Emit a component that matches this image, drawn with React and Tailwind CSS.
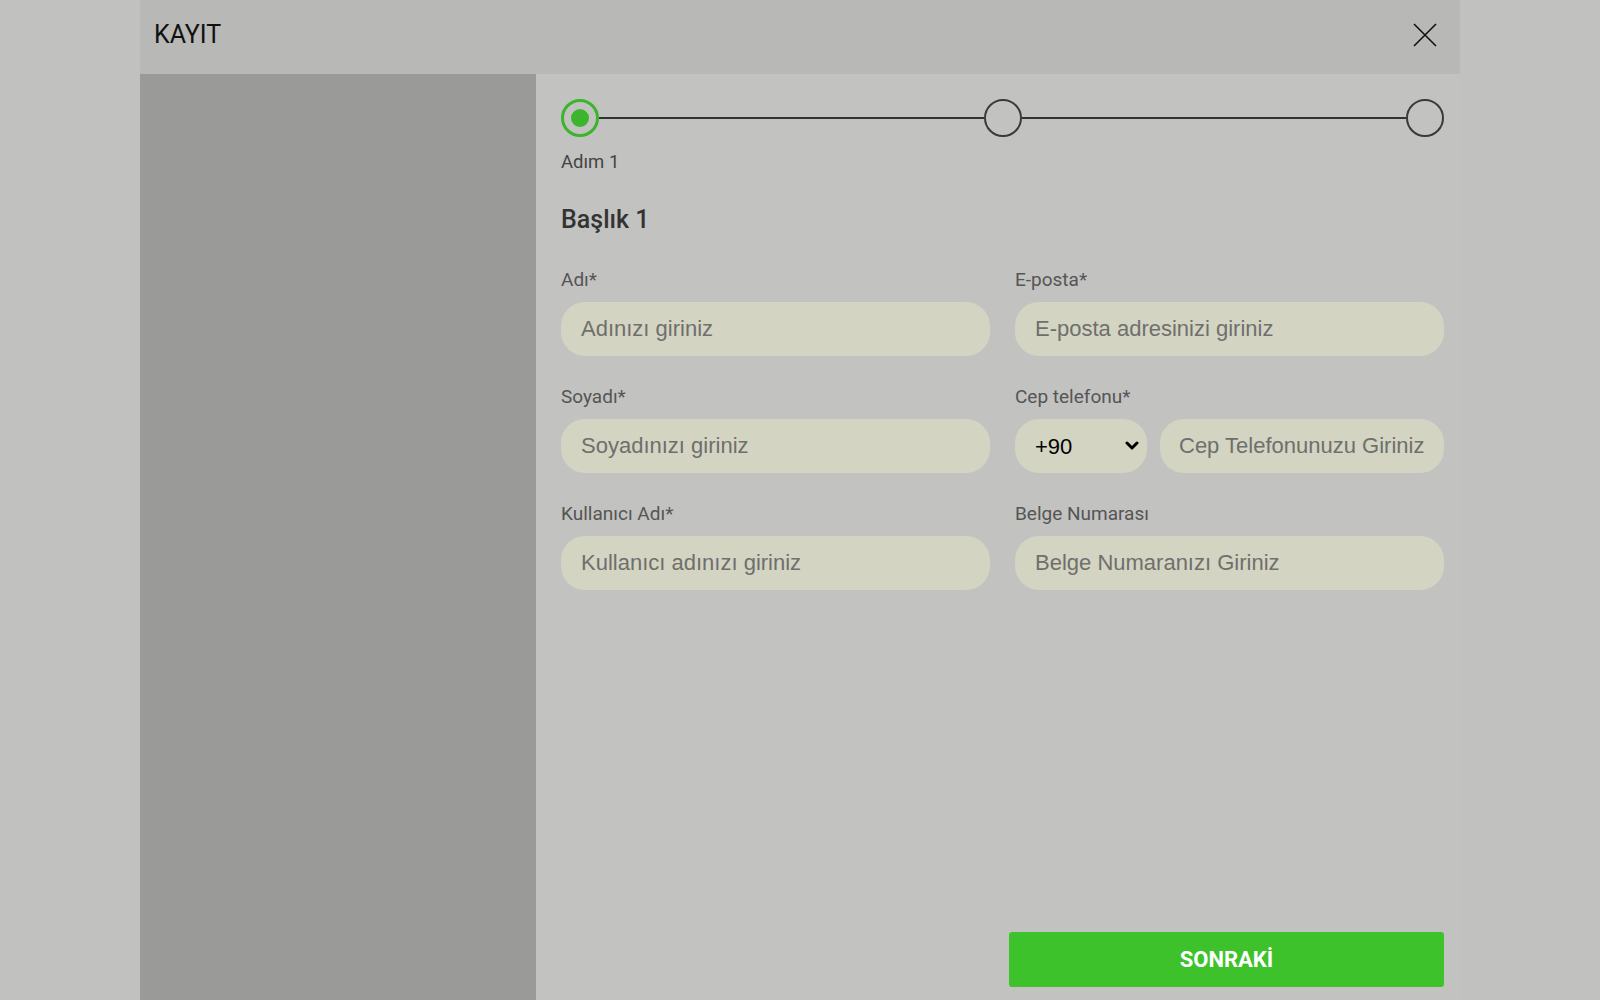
import React from "react";

function Field({ label, placeholder }) {
  return (
    <div className="flex flex-col">
      <label className="text-[19px] leading-[21px] text-[#555555] font-['Roboto',sans-serif]">{label}</label>
      <input
        className="mt-[12px] h-[54px] w-full rounded-[24px] bg-[#d4d4c3] px-[20px] text-[22px] text-[#222] font-['Liberation_Sans',Arial,sans-serif] outline-none placeholder:text-[#6f6f6c]"
        placeholder={placeholder}
      />
    </div>
  );
}

export default function App() {
  return (
    <div className="min-h-[1000px] w-full bg-[#c1c1bf] font-['Roboto',sans-serif]">
      <div className="mx-auto flex w-[1320px] flex-col">
        <div className="flex h-[74px] items-center justify-between bg-[#b8b8b6] pb-[4px] pl-[14px] pr-[23px]">
          <span className="text-[25px] text-[#111111]">KAYIT</span>
          <button className="flex h-[24px] w-[24px] items-center justify-center">
            <svg width="24" height="24" viewBox="0 0 24 24" fill="none">
              <path d="M1 1 L23 23 M23 1 L1 23" stroke="#111" strokeWidth="1.6" />
            </svg>
          </button>
        </div>
        <div className="flex h-[926px]">
          <div className="w-[396px] shrink-0 bg-[#9a9a99]" />
          <div className="flex flex-1 flex-col bg-[#c2c2c0] pl-[25px] pr-[16px] pt-[25px] pb-[13px]">
            <div className="flex items-center">
              <div className="flex h-[38px] w-[38px] shrink-0 items-center justify-center rounded-full border-[3px] border-[#3bb52c]">
                <div className="h-[18px] w-[18px] rounded-full bg-[#3bb52c]" />
              </div>
              <div className="h-[2px] flex-1 bg-[#333333]" />
              <div className="h-[38px] w-[38px] shrink-0 rounded-full border-[2.5px] border-[#3a3a3a]" />
              <div className="h-[2px] flex-1 bg-[#333333]" />
              <div className="h-[38px] w-[38px] shrink-0 rounded-full border-[2.5px] border-[#3a3a3a]" />
            </div>
            <div className="mt-[15px] text-[18.5px] leading-[21px] text-[#444444]">Adım 1</div>
            <div className="mt-[33px] text-[25px] font-medium leading-[28px] text-[#333333]">Başlık 1</div>
            <div className="mt-[35px] grid grid-cols-2 gap-x-[25px] gap-y-[30px]">
              <Field label="Adı*" placeholder="Adınızı giriniz" />
              <Field label="E-posta*" placeholder="E-posta adresinizi giriniz" />
              <Field label="Soyadı*" placeholder="Soyadınızı giriniz" />
              <div className="flex flex-col">
                <label className="text-[19px] leading-[21px] text-[#555555]">Cep telefonu*</label>
                <div className="mt-[12px] flex gap-[13px]">
                  <div className="relative w-[132px] shrink-0">
                    <select className="h-[54px] w-full appearance-none rounded-[24px] bg-[#d4d4c3] pl-[20px] pr-[30px] text-[22px] text-[#000] font-['Liberation_Sans',Arial,sans-serif] outline-none">
                      <option>+90</option>
                    </select>
                    <svg className="pointer-events-none absolute right-[8px] top-[22px]" width="14" height="10" viewBox="0 0 14 10" fill="none">
                      <path d="M2 2 L7 7 L12 2" stroke="#000" strokeWidth="3" strokeLinecap="round" strokeLinejoin="round" />
                    </svg>
                  </div>
                  <input
                    className="h-[54px] min-w-0 flex-1 rounded-[24px] bg-[#d4d4c3] px-[19px] text-[22px] text-[#222] font-['Liberation_Sans',Arial,sans-serif] outline-none placeholder:text-[#6f6f6c]"
                    placeholder="Cep Telefonunuzu Giriniz"
                  />
                </div>
              </div>
              <Field label="Kullanıcı Adı*" placeholder="Kullanıcı adınızı giriniz" />
              <Field label="Belge Numarası" placeholder="Belge Numaranızı Giriniz" />
            </div>
            <div className="mt-auto flex justify-end">
              <button className="h-[55px] w-[435px] rounded-[3px] bg-[#3dc22b] text-[22px] font-bold text-white">
                SONRAKİ
              </button>
            </div>
          </div>
        </div>
      </div>
    </div>
  );
}
